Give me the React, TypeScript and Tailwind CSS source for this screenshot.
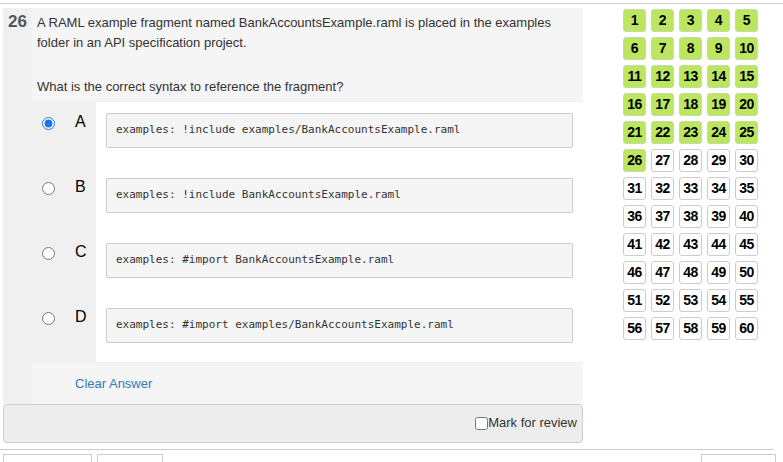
import React from 'react';

interface Option {
  letter: string;
  code: string;
  selected?: boolean;
}

const options: Option[] = [
  { letter: 'A', code: 'examples: !include examples/BankAccountsExample.raml', selected: true },
  { letter: 'B', code: 'examples: !include BankAccountsExample.raml' },
  { letter: 'C', code: 'examples: #import BankAccountsExample.raml' },
  { letter: 'D', code: 'examples: #import examples/BankAccountsExample.raml' },
];

const answered = 26;
const numbers = Array.from({ length: 60 }, (_, i) => i + 1);

const OptionRow: React.FC<{ option: Option }> = ({ option }) => {
  return (
    <div className="flex h-[65px]">
      <div className="w-[64px] flex items-start">
        <input
          type="radio"
          name="answer"
          defaultChecked={option.selected}
          className="m-0 ml-[10px] mt-[15px] h-[13px] w-[13px] accent-[#1a73e8]"
        />
        <span className="ml-[20px] mt-[11px] text-[16px] leading-[18px] text-black">{option.letter}</span>
      </div>
      <div className="flex-1 bg-white px-[10px] pt-[11px]">
        <div className="h-[35px] flex items-center border border-[#cccccc] rounded-[2px] bg-[#f5f5f5] pl-[9px] font-['DejaVu_Sans_Mono',monospace] text-[11px] text-[#333333]">
          {option.code}
        </div>
      </div>
    </div>
  );
};

const App: React.FC = () => {
  return (
    <div className="h-[462px] overflow-hidden bg-white font-['Liberation_Sans',Arial,sans-serif]">
      <div className="h-[3px]" />
      <div className="border-t border-[#d3d3d3]" />
      <div className="flex pt-[4px]">
        <div className="ml-[3px] w-[580px]">
          <div className="flex bg-[#f0f0f0]">
            <div className="w-[29px] pl-[5px] pt-[4px] text-[17px] leading-[20px] font-bold text-[#555555]">
              {answered}
            </div>
            <div className="flex-1">
              <div className="h-[93px] bg-[#f5f5f5] pl-[5px] pr-[20px] pt-[5px] text-[13px] leading-[20px] text-[#333333]">
                <p>A RAML example fragment named BankAccountsExample.raml is placed in the examples folder in an API specification project.</p>
                <p className="mt-[24px]">What is the correct syntax to reference the fragment?</p>
              </div>
              <div className="h-[262px] pt-[1px]">
                {options.map((option) => (
                  <OptionRow key={option.letter} option={option} />
                ))}
              </div>
              <div className="h-[41px] bg-[#f5f5f5] pl-[43px] flex items-center text-[13px] text-[#337ab7]">
                Clear Answer
              </div>
            </div>
          </div>
          <div className="h-[39px] border border-[#cccccc] rounded-[4px] bg-[#ededed] flex justify-end items-start pt-[10px] pr-[5px]">
            <label className="flex items-center text-[13px] leading-[16px] text-[#333333]">
              <input type="checkbox" className="m-0 h-[13px] w-[13px]" />
              Mark for review
            </label>
          </div>
        </div>
        <div className="ml-[40px] pt-[1px]">
          <div className="grid grid-cols-5 gap-[5px]">
            {numbers.map((n) => (
              <div
                key={n}
                className={
                  n <= answered
                    ? 'h-[23px] w-[23px] flex items-center justify-center rounded-[3px] border border-[#c9d9a8] bg-[#bde660] text-[14px] font-bold tracking-[-0.5px] text-black'
                    : 'h-[23px] w-[23px] flex items-center justify-center rounded-[3px] border border-[#cccccc] bg-white text-[14px] font-bold tracking-[-0.5px] text-black'
                }
              >
                {n}
              </div>
            ))}
          </div>
        </div>
      </div>
      <div className="mt-[6px] w-[773px] border-t border-[#cccccc]" />
      <div className="flex mt-[4px]">
        <div className="ml-[3px] h-[30px] w-[89px] border border-[#cccccc] bg-white" />
        <div className="ml-[5px] h-[30px] w-[66px] border border-[#cccccc] bg-white" />
        <div className="ml-[538px] h-[30px] w-[75px] border border-[#cccccc] bg-white" />
      </div>
    </div>
  );
};

export default App;
